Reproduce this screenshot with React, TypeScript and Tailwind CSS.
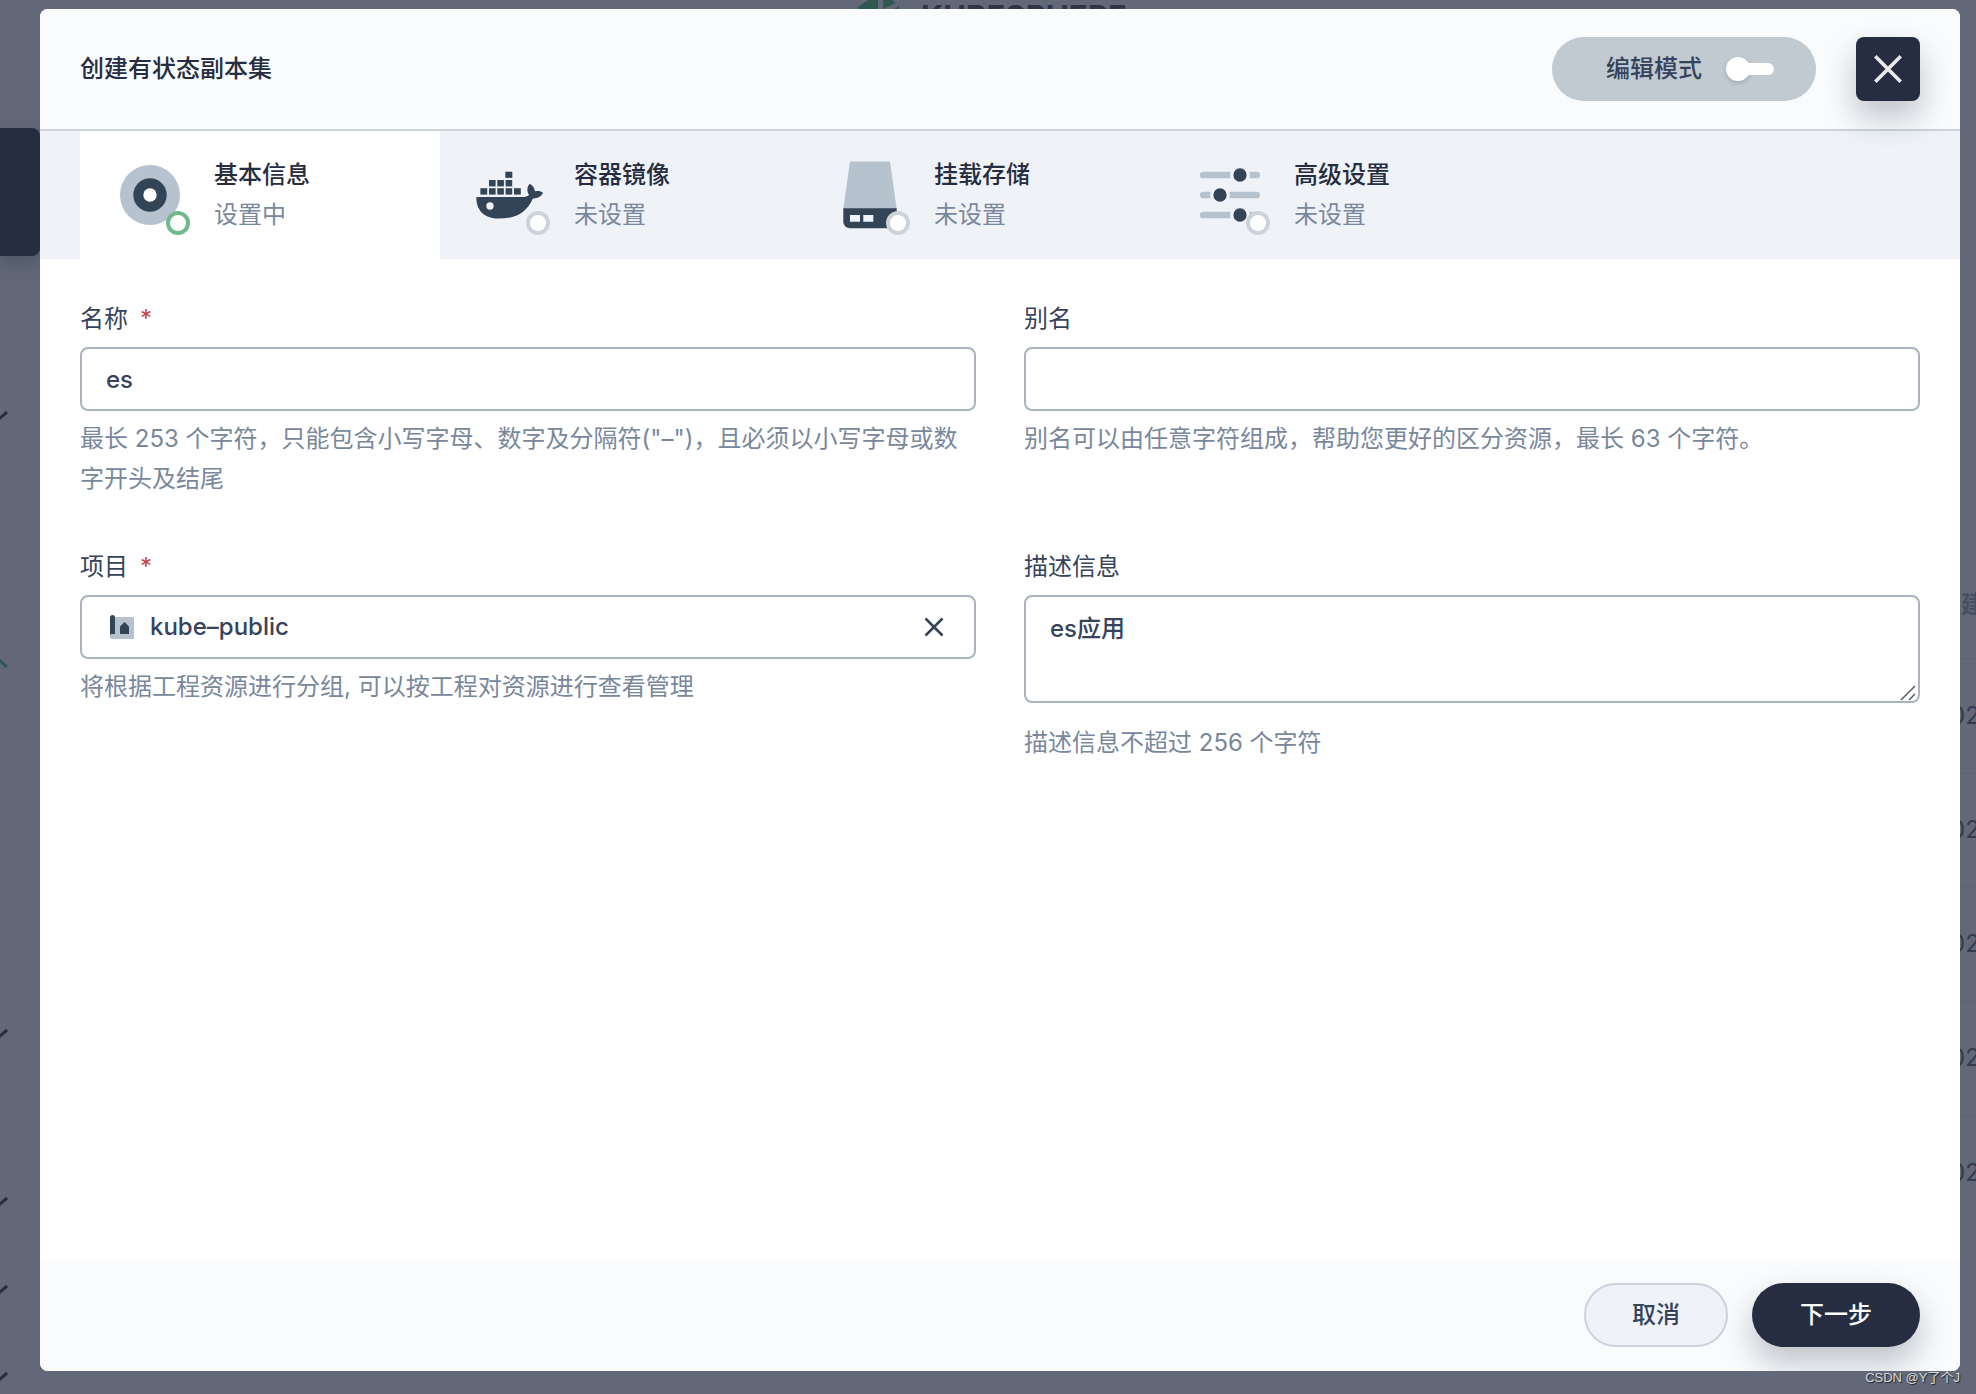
import { useState } from 'react';
import type { ReactNode } from 'react';

function GearDisc() {
  return (
    <svg viewBox="0 0 80 80" className="size-20" aria-hidden="true">
      <circle cx="40" cy="40" r="30" fill="#b6c2cd" />
      <circle cx="40" cy="40" r="16.7" fill="#344457" />
      <circle cx="40" cy="40" r="6.7" fill="#fff" />
    </svg>
  );
}

function DockerWhale() {
  return (
    <svg viewBox="0 0 80 80" className="size-20" aria-hidden="true" fill="#344457">
      <rect x="35.3" y="16.7" width="7" height="6.2" />
      <rect x="19" y="25" width="6.6" height="6.4" />
      <rect x="27.3" y="25" width="6.6" height="6.4" />
      <rect x="35.6" y="25" width="6.6" height="6.4" />
      <rect x="10.4" y="33.2" width="6.8" height="6.4" />
      <rect x="19" y="33.2" width="6.6" height="6.4" />
      <rect x="27.3" y="33.2" width="6.6" height="6.4" />
      <rect x="35.6" y="33.2" width="6.6" height="6.4" />
      <rect x="44" y="33.2" width="6.8" height="6.4" />
      <path d="M6.4 42H52c3 0 5.400-.6 7-2-2.400-3.800-2.200-8.400.8-11.200 3.200 1.800 4.800 4.300 5 7.500 3.200-.8 6.200-.3 8.300 1.500-1.800 4-5.600 5.900-10.200 5.700C57 57.500 45.500 63.600 29 63.600 13.500 63.600 6 54.500 6.400 42Z" />
      <circle cx="20" cy="51" r="3.700" fill="#eff3f8" />
    </svg>
  );
}

function StorageDisk() {
  return (
    <svg viewBox="0 0 80 80" className="size-20" aria-hidden="true">
      <path d="M20 6.500h40L66.700 54H13.300Z" fill="#b6c2cd" />
      <path d="M13.300 53.300h53.400v13.400a6.600 6.600 0 0 1-6.600 6.600H19.900a6.600 6.600 0 0 1-6.600-6.600Z" fill="#344457" />
      <path d="M20 60h10v6.700H20ZM33.300 60h10v6.700h-10Z" fill="#eff3f8" />
    </svg>
  );
}

function Sliders() {
  return (
    <svg viewBox="0 0 80 80" className="size-20" aria-hidden="true">
      <g stroke="#b6c2cd" strokeWidth="6.700" strokeLinecap="round">
        <path d="M13.300 20h53.400M13.300 40h53.400M13.300 60h53.400" />
      </g>
      <g fill="#344457" stroke="#eff3f8" strokeWidth="3.300">
        <circle cx="50" cy="20" r="8.300" />
        <circle cx="30" cy="40" r="8.300" />
        <circle cx="50" cy="60" r="8.300" />
      </g>
    </svg>
  );
}

function ProjectIcon() {
  return (
    <svg viewBox="0 0 32 32" className="size-8" aria-hidden="true">
      <path d="M4 6h24v22H6a2 2 0 0 1-2-2Z" fill="#b6c2cd" />
      <path d="M4 6.500A2.500 2.500 0 0 1 9 6.500V23H6a2.500 2.500 0 0 0-2 1Z" fill="#344457" />
      <path d="M18.500 11 23 15.500V23h-9v-7.500Z" fill="#344457" />
    </svg>
  );
}

type Step = { title: string; status: string; icon: ReactNode; active?: boolean };

const steps: Step[] = [
  { title: '基本信息', status: '设置中', icon: <GearDisc />, active: true },
  { title: '容器镜像', status: '未设置', icon: <DockerWhale /> },
  { title: '挂载存储', status: '未设置', icon: <StorageDisk /> },
  { title: '高级设置', status: '未设置', icon: <Sliders /> },
];

function StepTab({ step }: { step: Step }) {
  return (
    <button
      type="button"
      role="tab"
      aria-selected={!!step.active}
      className={`flex h-32 w-[360px] items-center gap-6 pl-[30px] text-left ${step.active ? 'bg-white' : ''}`}
    >
      <span className="relative size-20">
        {step.icon}
        <span
          className={`absolute right-0 bottom-0 size-6 rounded-full border-4 bg-white ${
            step.active ? 'border-[#6fba8b]' : 'border-[#ccd3db]'
          }`}
        />
      </span>
      <span className="flex flex-col">
        <span className="text-2xl leading-10 font-medium text-[#262d40]">{step.title}</span>
        <span className="text-2xl leading-10 text-[#79879c]">{step.status}</span>
      </span>
    </button>
  );
}

function Field({ id, label, required, hint, children }: {
  id: string;
  label: string;
  required?: boolean;
  hint: string;
  children: ReactNode;
}) {
  return (
    <div className="flex flex-col">
      <label htmlFor={id} className="mb-2 text-2xl leading-10 text-[#36435c]">
        {label}
        {required && <span className="ml-3 text-[#c9433a]">*</span>}
      </label>
      {children}
      <p className="mt-2 text-2xl leading-10 text-[#79879c]">{hint}</p>
    </div>
  );
}

const boxClass = 'w-full rounded-lg border-2 border-[#abb4be] bg-white text-2xl font-medium text-[#36435c] outline-none';

function Backdrop() {
  return (
    <div className="absolute inset-0 overflow-hidden" aria-hidden="true">
      <div className="absolute top-32 left-0 h-32 w-10 rounded-r-lg bg-[#262d3f] shadow-[0_8px_16px_rgba(36,46,66,0.28)]" />
      <svg className="absolute top-0 left-[856px] h-3 w-12" viewBox="0 0 48 12" fill="#2f5850">
        <path d="M2 9V7L12 0H22V9ZM27 0h9l4 3-13 6ZM38 9l5-3v3Z" />
      </svg>
      <span className="absolute top-[5px] left-[921px] text-[31px] leading-6 font-bold text-[#2f3447]">KUBESPHERE</span>
      {[410, 1028, 1196, 1284, 1371].map((y) => (
        <svg key={y} className="absolute left-0 h-3 w-2" style={{ top: y }} viewBox="0 0 8 12" fill="none" stroke="#262d3f" strokeWidth="3">
          <path d="m-1 9 8-7" />
        </svg>
      ))}
      <svg className="absolute top-[658px] left-0 h-3 w-2" viewBox="0 0 8 12" fill="none" stroke="#2f5850" strokeWidth="3">
        <path d="m-1 2 8 7" />
      </svg>
      <span className="absolute top-[585px] left-[1961px] text-2xl leading-10 font-semibold whitespace-nowrap text-[#454e62]">建</span>
      {[696, 810, 924, 1038, 1153].map((y) => (
        <span key={y} className="absolute left-[1950px] text-2xl leading-10 whitespace-nowrap text-[#343b4e]" style={{ top: y }}>
          02
        </span>
      ))}
      {[658, 772, 886, 1000, 1115].map((y) => (
        <span key={y} className="absolute right-0 h-0.5 w-4 bg-[#5e6576]" style={{ top: y }} />
      ))}
    </div>
  );
}

export default function App() {
  const [name, setName] = useState('es');
  const [alias, setAlias] = useState('');
  const [project, setProject] = useState('kube–public');
  const [description, setDescription] = useState('es应用');

  return (
    <div className="relative flex h-screen flex-col overflow-hidden bg-[#626877] px-10 pt-[9px] pb-[23px] font-['Inter','Noto_Sans_CJK_SC',sans-serif] 2xl:pr-4">
      <Backdrop />
      <section
        role="dialog"
        aria-labelledby="dialog-title"
        className="relative flex flex-1 flex-col overflow-hidden rounded-lg bg-white"
      >
        <header className="flex h-[122px] items-center border-b-2 border-[#ccd3db] bg-[#f9fbfd] px-10">
          <h1 id="dialog-title" className="flex-1 text-2xl leading-10 font-medium text-[#262d40]">
            创建有状态副本集
          </h1>
          <button
            type="button"
            role="switch"
            aria-checked="false"
            className="flex h-16 w-[264px] items-center justify-center gap-6 rounded-full bg-[#c1c9d1] pl-3 text-2xl font-medium text-[#36435c]"
          >
            编辑模式
            <span className="flex h-6 w-12 items-center">
              <span className="size-6 rounded-full bg-white shadow-[0_2px_4px_rgba(36,46,66,0.2)]" />
              <span className="-ml-3 h-3 flex-1 rounded-full bg-white" />
            </span>
          </button>
          <button
            type="button"
            aria-label="关闭"
            className="relative z-10 ml-10 flex size-16 items-center justify-center rounded-lg bg-[#262d40] shadow-[0_16px_32px_rgba(36,46,66,0.28)]"
          >
            <svg viewBox="0 0 28 28" className="size-7" stroke="#e9eaec" strokeWidth="3.600" aria-hidden="true">
              <path d="m1.300 1.300 25.400 25.400M26.700 1.300 1.300 26.700" />
            </svg>
          </button>
        </header>

        <nav role="tablist" className="flex bg-[#eff3f8] px-10">
          {steps.map((step) => (
            <StepTab key={step.title} step={step} />
          ))}
        </nav>

        <main className="grid flex-1 grid-cols-2 content-start gap-x-12 gap-y-12 px-10 pt-10">
          <Field id="name" label="名称" required hint={'最长 253 个字符，只能包含小写字母、数字及分隔符("–")，且必须以小写字母或数字开头及结尾'}>
            <input id="name" value={name} onChange={(e) => setName(e.target.value)} className={`${boxClass} h-16 px-6`} />
          </Field>
          <Field id="alias" label="别名" hint="别名可以由任意字符组成，帮助您更好的区分资源，最长 63 个字符。">
            <input id="alias" value={alias} onChange={(e) => setAlias(e.target.value)} className={`${boxClass} h-16 px-6`} />
          </Field>
          <Field id="project" label="项目" required hint="将根据工程资源进行分组, 可以按工程对资源进行查看管理">
            <div className={`${boxClass} flex h-16 items-center gap-3 px-6`}>
              <ProjectIcon />
              <input
                id="project"
                value={project}
                onChange={(e) => setProject(e.target.value)}
                className="min-w-0 flex-1 bg-transparent outline-none"
              />
              <button type="button" aria-label="清除" className="flex size-8 items-center justify-center" onClick={() => setProject('')}>
                <svg viewBox="0 0 20 20" className="size-5" stroke="#344457" strokeWidth="2.500" aria-hidden="true">
                  <path d="m1.500 1.500 17 17M18.500 1.500l-17 17" />
                </svg>
              </button>
            </div>
          </Field>
          <Field id="description" label="描述信息" hint="描述信息不超过 256 个字符">
            <div className="relative mb-3 flex">
              <textarea
                id="description"
                value={description}
                onChange={(e) => setDescription(e.target.value)}
                className={`${boxClass} h-[108px] resize-y px-6 py-3 leading-10 [&::-webkit-resizer]:bg-transparent`}
              />
              <svg
                viewBox="0 0 16 16"
                className="pointer-events-none absolute right-1 bottom-0.5 size-4"
                stroke="#5c5c5c"
                strokeWidth="1.500"
                aria-hidden="true"
              >
                <path d="M1 15 15 1M9 15l6-6" />
              </svg>
            </div>
          </Field>
        </main>

        <footer className="flex h-28 items-center justify-end gap-6 bg-[#f9fbfd] px-10">
          <button
            type="button"
            className="h-16 w-36 rounded-full border-2 border-[#ccd3db] bg-[#eff3f8] text-2xl font-medium text-[#36435c]"
          >
            取消
          </button>
          <button
            type="button"
            className="h-16 w-[168px] rounded-full bg-[#262d40] text-2xl font-medium text-white shadow-[0_16px_32px_rgba(36,46,66,0.28)]"
          >
            下一步
          </button>
        </footer>
      </section>
      <span className="absolute right-4 bottom-1 font-['Liberation_Sans','Noto_Sans_CJK_SC',sans-serif] text-[13px] leading-6 text-[#d5d7dc] [text-shadow:1px_1px_1px_#222]">
        CSDN @Y了个J
      </span>
    </div>
  );
}
